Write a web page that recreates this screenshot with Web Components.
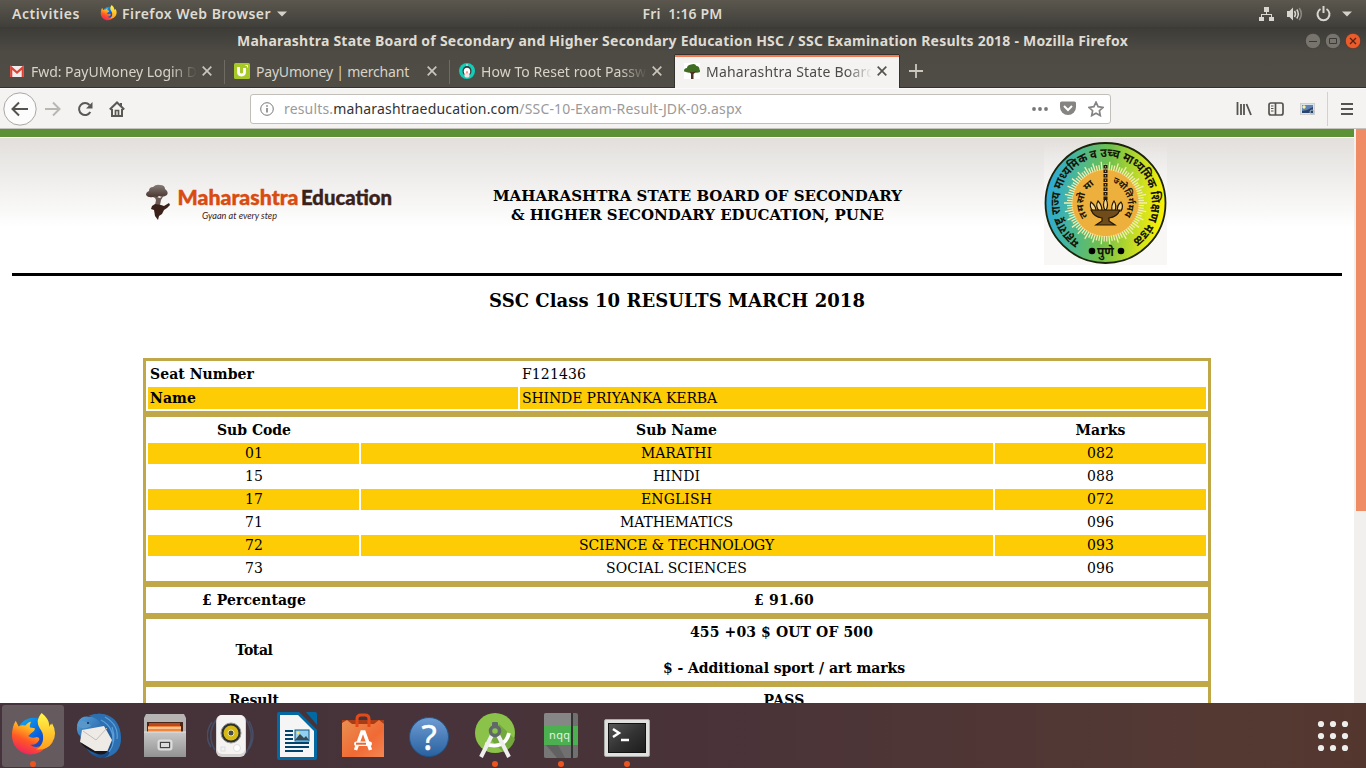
<!DOCTYPE html>
<html lang="en">
<head>
<meta charset="utf-8">
<title>Maharashtra State Board - SSC Results</title>
<style>
html,body{margin:0;height:100%;overflow:hidden;background:#fff}
</style>
</head>
<body>
<desktop-screen></desktop-screen>
<script>
const define=(name,html,after)=>customElements.define(name,class extends HTMLElement{
  constructor(){super();this.attachShadow({mode:'open'});}
  connectedCallback(){
    this.shadowRoot.innerHTML=typeof html==='function'?html(this):html;
    if(after)after(this);
  }
});
const UI='"Noto Sans","Open Sans",sans-serif';

const FIREFOX=id=>`<defs><linearGradient id="f${id}" x1=".8" y1="0" x2=".3" y2="1"><stop offset="0" stop-color="#fff44f"/><stop offset=".35" stop-color="#ffb01f"/><stop offset=".65" stop-color="#ff5726"/><stop offset="1" stop-color="#f0225f"/></linearGradient><linearGradient id="g${id}" x1="0" y1="0" x2="1" y2="1"><stop offset="0" stop-color="#0fb4f8"/><stop offset=".55" stop-color="#0a60dd"/><stop offset="1" stop-color="#36238a"/></linearGradient><linearGradient id="h${id}" x1="0" y1="0" x2="0" y2="1"><stop offset="0" stop-color="#fff94a"/><stop offset="1" stop-color="#ff9d1a"/></linearGradient></defs>
<circle cx="25" cy="23" r="18" fill="url(#g${id})"/>
<path d="M6 8l3 6q3-2 7-1 3-4 6-4-2 4-1 6l5 1q0 3-4 5l-3 3q4 3 9 1 4 1 2 4-3 5-9 4 6 5 13 0 7-5 4-14l5-8q4 13-4 23-8 11-21 9Q3 39 2 24 2 14 6 8z" fill="url(#f${id})"/>
<path d="M33 0q-7 8-2 16 5 6 3 14-2 6-7 8 12 1 17-7 6-10 0-20-2 4-3 4 1-8-8-15z" fill="url(#h${id})"/>`;

define('desktop-screen',`
<style>:host{display:flex;flex-direction:column;width:1366px;height:768px;overflow:hidden;font-family:${UI}}</style>
<top-bar></top-bar><window-title></window-title><tab-strip></tab-strip><nav-bar></nav-bar><page-view></page-view><app-dock></app-dock>`);

define('top-bar',`
<style>
:host{display:grid;grid-template-columns:1fr auto 1fr;align-items:center;height:27px;flex:none;background:linear-gradient(#5b574e,#403f3a);color:#dfdbd2;font-size:14px;font-weight:600;box-sizing:border-box;padding:0 14px 0 12px}
.l,.r{display:flex;align-items:center}
.r{justify-content:flex-end}
svg{display:block}
.m{margin-left:1px}
</style>
<div class="l"><fit-text w="68">Activities</fit-text><svg style="margin:0 5px 0 20px" width="17" height="17" viewBox="0 0 48 48">${FIREFOX('a')}</svg><fit-text w="149">Firefox Web Browser</fit-text><svg style="margin-left:6px" width="10" height="6"><path d="M0 .5h10L5 5.500z" fill="#d5d1c9"/></svg></div>
<fit-text class="m" w="80">Fri&nbsp; 1:16 PM</fit-text>
<div class="r">
<svg width="16" height="16" fill="#d9d6cf"><path d="M5 1h5v5H5zM0 11h5v4H0zM10 11h5v4h-5zM7 6h1v2h5v3h-1V9H3v2H2V8h5z"/></svg>
<svg style="margin-left:12px" width="16" height="16" viewBox="0 0 16 16" fill="none" stroke="#d9d6cf" stroke-width="1.500"><path d="M0 5h2.500L6 1.500v13L2.500 11H0z" fill="#d9d6cf" stroke="none"/><path d="M7.500 5Q9.500 8 7.500 11"/><path d="M9.800 3.500Q12.800 8 9.800 12.500"/><path stroke="#8d8a82" d="M12.200 2Q16.500 8 12.200 14"/></svg>
<svg style="margin-left:13px" width="15" height="16" fill="none" stroke="#d9d6cf" stroke-width="2"><path d="M4.500 3A6 6 0 1 0 10.500 3M7.500 0v7"/></svg>
<svg style="margin-left:11px" width="10" height="6"><path d="M0 .5h10L5 5.500z" fill="#d5d1c9"/></svg>
</div>`);

define('window-title',`
<style>
:host{display:grid;grid-template-columns:1fr auto 1fr;align-items:center;height:28px;flex:none;background:linear-gradient(#3c3b37,#4e4b44 90%);color:#dfdbd2;font-weight:700;font-size:14px;padding:0 5px 0 4px}
.b{display:flex;gap:4px;justify-content:flex-end}svg{display:block}
fit-text{margin-top:-2px}
</style><span></span><fit-text w="891">Maharashtra State Board of Secondary and Higher Secondary Education HSC / SSC Examination Results 2018 - Mozilla Firefox</fit-text>
<div class="b">
<svg width="16" height="16"><circle cx="8" cy="8" r="7.700" fill="#77746d" stroke="#33322e" stroke-width=".6"/><path d="M4 8.500h8" stroke="#3a3935"/></svg>
<svg width="16" height="16"><circle cx="8" cy="8" r="7.700" fill="#77746d" stroke="#33322e" stroke-width=".6"/><path d="M4.500 5.500h7v5h-7z" fill="none" stroke="#3a3935"/></svg>
<svg width="16" height="16"><circle cx="8" cy="8" r="7.700" fill="#ec5b2c" stroke="#33322e" stroke-width=".6"/><path d="M5 5l6 6M11 5l-6 6" stroke="#54240f" stroke-width="1.300"/></svg>
</div>`);

define('browser-tab',e=>`
<style>
:host{display:flex;align-items:center;width:225px;height:32px;box-sizing:border-box;padding:0 13px 0 9px;color:#d8d3c8;font-size:14px;position:relative}
:host(:not([active]))::after{content:"";position:absolute;right:0;top:5px;width:1px;height:24px;background:#6e6b63}
:host([nosep])::after{display:none}
:host([active]){background:#f4f3f2;color:#4c4b48;border-top:2px solid #f1784f;width:224px;padding-right:12px;height:33px;box-shadow:-1px 0 #33322d,1px 0 #33322d,0 -1px #33322d;padding-bottom:3px}
.t{width:165px;margin-left:6px;overflow:hidden;white-space:nowrap;-webkit-mask-image:linear-gradient(90deg,#000 140px,transparent 166px)}
:host([full]) .t{-webkit-mask-image:none}
.c{margin-left:auto;display:block}
::slotted(svg){display:block;flex:none}
</style><slot></slot><div class="t"><fit-text w="${e.getAttribute('w')}">${e.getAttribute('label')}</fit-text></div>
<svg class="c" width="10" height="10"><path d="M.7.7l8.600 8.600M9.300.7L.7 9.300" stroke="${e.hasAttribute('active')?'#55534f':'#c9c5bc'}" stroke-width="1.700"/></svg>`);

define('tab-strip',`
<style>:host{display:flex;height:32px;flex:none;background:linear-gradient(#4e4b44,#504d46);box-shadow:inset 0 -1px #33322d;align-items:flex-start;padding-bottom:1px;position:relative}
.p{display:block;margin:9px 0 0 10px}browser-tab{flex:none}</style>
<browser-tab w="166" label="Fwd: PayUMoney Login D"><svg width="16" height="16"><rect x="1" y="3" width="14" height="11" fill="#eee"/><path d="M2.200 14V4.500L8 9.500l5.800-5V14" fill="none" stroke="#db4437" stroke-width="2.200"/></svg></browser-tab>
<browser-tab full w="153" label="PayUmoney | merchant"><svg width="16" height="16"><rect width="16" height="16" rx="1.500" fill="#a6c927"/><path d="M4.500 4v5q0 3 3 3t3-3V5" fill="none" stroke="#fff" stroke-width="2.800"/><path d="M11.500 2.500h2v2" fill="none" stroke="#fff"/></svg></browser-tab>
<browser-tab nosep w="165" label="How To Reset root Passw"><svg width="16" height="16"><circle cx="8" cy="8" r="8" fill="#12cdb8"/><circle cx="8" cy="2" r=".8" fill="#fff"/><ellipse cx="8" cy="8" rx="4.500" ry="5" fill="#3b3438"/><ellipse cx="8" cy="8.200" rx="3.200" ry="3.500" fill="#fff"/><circle cx="8" cy="12" r="2.600" fill="#f2e4e4"/><path d="M7 8.500h2L8 11z" fill="#ef5a4a"/></svg></browser-tab>
<browser-tab active w="169" label="Maharashtra State Board"><svg width="16" height="16"><rect width="16" height="16" fill="#fff"/><path d="M0 8.500Q-.2 5 3 5q0-3 4-3.500 4-1.500 5.500 1.500 3 0 3 3.500 1.500 2.500-1 3-2.500.5-6-.5-4 1.500-8-.5z" fill="#3f6d22"/><path d="M5 8l2 3v5h2.500v-5L13 8l-3.500 1H6z" fill="#4c3424"/></svg></browser-tab>
<svg class="p" width="14" height="14"><path d="M7 0v14M0 7h14" stroke="#cbc7be" stroke-width="1.800"/></svg>`);

define('nav-bar',`
<style>
:host{display:flex;align-items:center;height:41px;flex:none;box-sizing:border-box;background:#f4f3f2;border-top:1px solid #fafafa;border-bottom:1px solid #c6c3bf;padding:0 13px 0 3px;position:relative}
svg{display:block;flex:none}
.url{display:flex;align-items:center;box-sizing:border-box;width:861px;height:30px;border:1px solid #c2bfbb;border-radius:3px;background:#fff;margin-left:125px;padding:0 6px 0 9px;font-size:14px;color:#9a9a9a;white-space:nowrap}
b{font-weight:400;color:#333}
.s{flex:1}
</style>
<svg width="34" height="34"><circle cx="17" cy="17" r="16.200" fill="#fcfcfc" stroke="#aaa7a3"/><path d="M25 17H10M16 10.500L9.500 17l6.500 6.500" fill="none" stroke="#55534f" stroke-width="2"/></svg>
<svg style="margin-left:8px" width="16" height="16" fill="none" stroke="#b9b7b4" stroke-width="2"><path d="M0 8h14M8 1.500L14.500 8 8 14.500"/></svg>
<svg style="margin-left:16px" width="16" height="16" fill="none" stroke="#5a5855" stroke-width="2"><path d="M13.300 11A6 6 0 1 1 12.500 4"/><path d="M15.500 1v6.500H9z" fill="#5a5855" stroke="none"/></svg>
<svg style="margin-left:16px" width="16" height="16" fill="none" stroke="#5a5855" stroke-width="2"><path d="M.8 8.500L8 1.500l7.200 7M3 8v7h10V8"/><path d="M12 2v3" /><path d="M6.500 15V9.500h3V15" stroke-width="1.700"/></svg>
<div class="url"><svg width="14" height="14" fill="none" stroke="#777"><circle cx="7" cy="7" r="6.300"/><path d="M7 6v4.500M7 3.200v1.500" stroke-width="1.500"/></svg>
<fit-text style="margin-left:10px" w="458">results.<b>maharashtraeducation.com</b>/SSC-10-Exam-Result-JDK-09.aspx</fit-text><span class="s"></span>
<svg width="16" height="6" fill="#777"><circle cx="2" cy="3" r="1.900"/><circle cx="8" cy="3" r="1.900"/><circle cx="14" cy="3" r="1.900"/></svg>
<svg style="margin-left:12px" width="16" height="15"><path d="M1.500.5h13q1.500 0 1.500 1.500v4a8 8 0 0 1-16 0V2Q0 .5 1.500.5z" fill="#858482"/><path d="M4 5l4 4 4-4" fill="none" stroke="#fff" stroke-width="2"/></svg>
<svg style="margin-left:12px" width="16" height="16" viewBox="0 0 16 16"><path d="M8 1.200l2.100 4.500 4.900.7-3.600 3.300.9 4.900L8 12.200l-4.300 2.400.9-4.900L1 6.400l4.900-.7z" fill="none" stroke="#858482" stroke-width="1.700"/></svg></div>
<span class="s"></span>
<svg width="16" height="16" stroke="#55534f" stroke-width="1.800"><path d="M1.500 1v13M5 3v11M8 3v11M10.500 3l4.500 11"/></svg>
<svg style="margin-left:16px" width="16" height="16" fill="none" stroke="#55534f" stroke-width="1.700"><rect x="1" y="2" width="14" height="12" rx="2"/><path d="M7.500 2v12"/><path d="M3 5h2.500M3 7.500h2.500M3 10h2.500" stroke-width="1"/></svg>
<svg style="margin-left:16px" width="16" height="16"><rect x=".5" y="2.500" width="14" height="11" fill="#dde3ea" stroke="#cfcfcf"/><rect x="2" y="4" width="11" height="8" fill="#5f83b3"/><path d="M2 10l5-1 6-3v6H2z" fill="#27446f"/><circle cx="4" cy="6" r="1.700" fill="#fff3a0"/><circle cx="12" cy="11" r="2" fill="none" stroke="#aab4c5"/></svg>
<svg style="margin-left:11px" width="1" height="34"><path d="M.5 0v34" stroke="#d3d0cd"/></svg>
<svg style="margin-left:13px" width="12" height="14" stroke="#55534f" stroke-width="2"><path d="M0 2h12M0 7h12M0 12h12"/></svg>`);

define('site-logo',`
<style>:host{display:block;width:250px;height:40px;font-weight:400}svg{display:block}</style>
<svg width="250" height="40" viewBox="0 0 250 40">
<defs><linearGradient id="t" x1="0" y1="0" x2="0" y2="1"><stop offset="0" stop-color="#857b76"/><stop offset="1" stop-color="#47332b"/></linearGradient></defs>
<g transform="translate(0 1)"><path d="M1 10q0-3 3-4 0-4 4-4 3-3 7-2 5 0 5 4 4 3 2 6-4 3-8 1-3 3-6 1-5 1-7-2z" fill="url(#t)"/><path d="M9 11l2 4-1 5h5l1-5 3-5-4 3-3-1z" fill="#6c5b54"/><path d="M7 21l3-2 6 1 3 1 5-3 1 2-3 3-3 2-2 4-3 2-1 4-3-4-1-6-3-1z" fill="#3a221a"/></g>
<text x="32.500" y="21" font-family="Lato,sans-serif" font-weight="900" font-size="20" textLength="121" lengthAdjust="spacingAndGlyphs" fill="#d94b10" stroke="#d94b10" stroke-width=".4">Maharashtra</text>
<text x="156" y="20.500" font-family="Lato,sans-serif" font-weight="900" font-size="20" textLength="91" lengthAdjust="spacingAndGlyphs" fill="#3a221a" stroke="#3a221a" stroke-width=".4">Education</text>
<text x="57" y="34.500" font-family="Lato,sans-serif" font-style="italic" font-size="9.500" textLength="75" lengthAdjust="spacingAndGlyphs" fill="#3a221a">Gyaan at every step</text></svg>`);

define('board-emblem',()=>{
let rays='';
for(let i=0;i<90;i++){const a=i*Math.PI/45,r=i%3?38.5:41.5;rays+=`M${61.5+33*Math.cos(a)} ${61+33*Math.sin(a)}L${61.5+r*Math.cos(a)} ${61+r*Math.sin(a)}`;}
return `<style>:host{display:block;width:123px;height:123px;background:linear-gradient(#fff0,#f8f7f6 50%)}svg{display:block}text{font-family:"Noto Sans Devanagari","Noto Sans",sans-serif;font-weight:700;fill:#171508}</style>
<svg width="123" height="123" viewBox="0 0 123 123"><defs><linearGradient id="r" x1="0" y1=".45" x2="1" y2=".55"><stop offset="0" stop-color="#2aa9e0"/><stop offset=".2" stop-color="#45b5a0"/><stop offset=".5" stop-color="#6fc04b"/><stop offset=".8" stop-color="#cfe01f"/><stop offset="1" stop-color="#fff200"/></linearGradient>
<path id="o" d="M37.100 100A46 46 0 1 1 85.900 100"/>
<path id="i" d="M45 76A21.500 21.500 0 0 1 61.500 40"/><path id="j" d="M61.500 40A21.500 21.500 0 0 1 78 76"/></defs>
<circle cx="61.500" cy="61" r="60" fill="url(#r)" stroke="#1b2408" stroke-width="1.800"/>
<circle cx="61.500" cy="61" r="34" fill="#eeb03c"/><path d="${rays}" stroke="#f3edb0" stroke-width="1.300"/>
<text font-size="12.500" textLength="233" lengthAdjust="spacingAndGlyphs"><textPath href="#o" startOffset="1">महाराष्ट्र राज्य माध्यमिक व उच्च माध्यमिक शिक्षण मंडळ</textPath></text>
<text font-size="9.500" textLength="37" lengthAdjust="spacingAndGlyphs"><textPath href="#i" startOffset="2">तमसो मा</textPath></text>
<text font-size="9.500" textLength="40" lengthAdjust="spacingAndGlyphs"><textPath href="#j" startOffset="7">ज्योतिर्गमय</textPath></text>
<text x="61.500" y="114" text-anchor="middle" font-size="12">पुणे</text><circle cx="48" cy="109" r="3.300"/><circle cx="77" cy="109" r="3.300"/>
<path d="M61.500 23v36" stroke="#211708" stroke-width="4" stroke-dasharray="3.500 1"/><path d="M61.500 24v34" stroke="#c9a13a" stroke-width="1.200" stroke-dasharray="1.500 3"/>
<g fill="#f8d98b" stroke="#211708" stroke-width="1.200"><path d="M49 69q-4-4-2-9 5 4 5 9zM55 69q-4-5-1-10 4 4 4 10zM61.500 69q-4-6 0-13 4 7 0 13zM68 69q-1-6 2-10 3 4 1 10zM74 69q-2-5 3-9 3 4 0 9z"/><path d="M47 68h29q-3 7-11 8v3l6 4H52l6-4v-3q-8-1-11-8z" fill="#6f4c1a"/></g></svg>`;});

define('marks-table',`
<style>
:host{display:block;width:1068px}
section{border:3px solid #c0a848;padding:2px;display:grid;gap:2px;box-sizing:border-box;font:14px/21px "DejaVu Serif",serif;color:#000}
.two{grid-template-columns:370px 1fr}
.three{grid-template-columns:211px 632px 211px;text-align:center}
.agg{grid-template-columns:211px 1fr;text-align:center;font-weight:700}
div{height:21px;padding:0 2px;display:flex;align-items:center;justify-content:center;box-sizing:border-box}
.two div,.h,.r{height:22px}.two div{justify-content:flex-start}
.two b,.h{font-weight:700}
.y{background:#fdcc05}
.three div:nth-child(3n+1),.agg div{padding:0 1px 0 2px}
.three div:nth-child(3n+2){padding:0 3px 0 2px}
.tot{height:58px;flex-direction:column;gap:15px}
</style>
<section class="two"><div><b><fit-text w="104">Seat Number</fit-text></b></div><div><fit-text w="64">F121436</fit-text></div>
<div class="y"><b><fit-text w="46">Name</fit-text></b></div><div class="y"><fit-text w="195">SHINDE PRIYANKA KERBA</fit-text></div></section>
<section class="three"></section>
<section class="agg"><div class="r"><fit-text w="104">£ Percentage</fit-text></div><div class="r"><fit-text w="60">£ 91.60</fit-text></div></section>
<section class="agg"><div class="tot"><fit-text w="37">Total</fit-text></div><div class="tot"><fit-text w="183" style="margin-right:5px">455 +03 $ OUT OF 500</fit-text><fit-text w="242">$ - Additional sport / art marks</fit-text></div></section>
<section class="agg"><div class="r"><fit-text w="50">Result</fit-text></div><div class="r"><fit-text w="41">PASS</fit-text></div></section>`,e=>{
  const rows=[['Sub Code',74,'Sub Name',81,'Marks',50],['01',18,'MARATHI',71,'082',27],['15',18,'HINDI',47,'088',27],['17',18,'ENGLISH',71,'072',27],['71',18,'MATHEMATICS',113,'096',27],['72',18,'SCIENCE &amp; TECHNOLOGY',195,'093',27],['73',18,'SOCIAL SCIENCES',141,'096',27]];
  e.shadowRoot.querySelector('.three').innerHTML=rows.map((r,n)=>[0,2,4].map(k=>`<div class="${n?(n%2?'y':''):'h'}"><fit-text w="${r[k+1]}">${r[k]}</fit-text></div>`).join('')).join('');
});

define('page-view',`
<style>
:host{display:flex;height:574px;flex:none;overflow:hidden;background:#fff;font-family:"DejaVu Serif",serif;color:#000}
main{width:1354px;flex:none;background:linear-gradient(#e2dfdc,#fff 90px) 0 9px no-repeat;height:574px;overflow:hidden}
.g{height:8px;background:#5c9135}
header{display:grid;grid-template-columns:481px 409px 1fr;height:136px;margin:0 12px;border-bottom:3px solid #000;font-weight:700;font-size:15px;line-height:19px}
header site-logo{margin:47px 0 0 133px}
.m{padding-top:50px;display:flex;flex-direction:column;align-items:center}
board-emblem{margin:5px 0 0 142px}
h1{margin:13px 0 0;text-align:center;font-size:18px;line-height:24px}
marks-table{margin:45px 0 0 143px}
aside{width:12px;background:#f1f0ef;display:flex;justify-content:flex-end}
aside i{width:10px;height:382px;background:#f08c65}
</style>
<main><div class="g"></div><header><site-logo></site-logo><div class="m"><fit-text w="409">MAHARASHTRA STATE BOARD OF SECONDARY</fit-text><fit-text w="373">&amp; HIGHER SECONDARY EDUCATION, PUNE</fit-text></div><board-emblem></board-emblem></header>
<h1><fit-text w="376">SSC Class 10 RESULTS MARCH 2018</fit-text></h1>
<marks-table></marks-table></main><aside><i></i></aside>`);

define('dock-item',`
<style>:host{display:flex;flex-direction:column;align-items:center;width:62px;height:62px;border-radius:3px;position:relative;box-sizing:border-box;padding-top:7px}
:host([active]){background:#655a5e}
:host([running])::after{content:"";position:absolute;left:28px;top:56px;width:6px;height:6px;border-radius:50%;background:#e95420}
::slotted(svg){display:block}</style><slot></slot>`);

define('app-dock',`
<style>:host{display:flex;gap:4px;height:65px;flex:none;background:linear-gradient(90deg,#44333a,#493339 50%,#543933 88%,#53372f);box-sizing:border-box;padding:2px}
.a{margin:15px 15px 0 auto;display:block}</style>
<dock-item active running><svg width="46" height="46" viewBox="0 0 48 48" style="margin-top:1px">${FIREFOX('b')}</svg></dock-item>
<dock-item><svg width="48" height="48"><defs><linearGradient id="tb" x2="1" y2="1"><stop stop-color="#5ba6e0"/><stop offset=".5" stop-color="#2765a8"/><stop offset="1" stop-color="#123569"/></linearGradient></defs><path d="M3 10q4-7 12-5 8-6 18-1 13 7 13 22 0 14-12 18-4 2-9 2-7-1-13-9L5 24q-5-5-2-14z" fill="url(#tb)"/><path d="M7 18l22-4 8 14-5 12H20L5 30z" fill="#eeeae5"/><path d="M8 19l13 9 11-12" fill="none" stroke="#c4beb8"/><path d="M5 30l15 9h13q-5 6-13 2Q10 37 5 30z" fill="#18171b"/><path d="M13 4q11 2 13 9 8-1 9 6 5 8-1 23-2 3-7 4 19-2 19-20Q45 5 28 2q-8-1-15 2z" fill="#2d70b2"/><path d="M30 5q14 8 12 22M26 8q13 7 12 22M37 15q5 14-3 25" fill="none" stroke="#5c9fd8" stroke-width="1.200"/><path d="M2 13q5 6 14 1-3-5-10-5-3 1-4 4z" fill="#5a97c9"/><circle cx="13" cy="11" r="1" fill="#112c50"/></svg></dock-item>
<dock-item><svg width="48" height="48"><defs><linearGradient id="fl" x2="0" y2="1"><stop stop-color="#c8c8c8"/><stop offset="1" stop-color="#929292"/></linearGradient></defs><path d="M5 2h38l2 4v17H3V6z" fill="#b6b5b4"/><rect x="6" y="10" width="36" height="13" fill="#48261a"/><path d="M8 11h31v3H8z" fill="#bc481c"/><path d="M7 14h33v9H7z" fill="#ee873e"/><path d="M7 16h33" stroke="#ffc191" stroke-width="2"/><path d="M3 20h42v25H3z" fill="url(#fl)"/><path d="M3 20h42" stroke="#e4e4e4"/><rect x="17.500" y="28.500" width="13" height="9" rx="2" fill="#a3a3a3" stroke="#dedede" stroke-width="2"/><rect x="19.500" y="30.500" width="9" height="5" fill="#ddd" stroke="#444"/></svg></dock-item>
<dock-item><svg width="48" height="48"><g fill="none" stroke="#486891" opacity=".5" stroke-width="1.500"><path d="M9 8Q-1 23 8 38M5 10Q-4 23 4 35M38 6q12 17 1 35M42 9q8 14 0 28"/></g><rect x="9" y="3" width="30" height="42" rx="6" fill="#d5d4d2"/><rect x="10" y="3" width="28" height="39" rx="5" fill="#f4f3f2"/><circle cx="24" cy="21" r="10" fill="#2e302d" stroke="#999" /><circle cx="24" cy="21" r="7.500" fill="#d7b916"/><circle cx="24" cy="21" r="3" fill="#4b4b4b" stroke="#eee5a0"/><circle cx="30" cy="36" r="3.500" fill="#fff" stroke="#e0e0e0"/><rect x="14" y="35" width="4" height="4" fill="none" stroke="#ddd"/></svg></dock-item>
<dock-item><svg width="48" height="48"><path d="M6 0h20l18 18v28q0 2-2 2H6q-2 0-2-2V2q0-2 2-2z" fill="#0369a3"/><path d="M7 3h18l16 16v26H7z" fill="#f5f5f5"/><path d="M33 0h9q2 0 2 2v11z" fill="#0369a3"/><path d="M12 19h8M12 23h8M12 27h8M12 31h24M12 35h24M12 39h18" stroke="#00436b" stroke-width="2"/><rect x="22" y="18" width="14" height="11" fill="#8fd0f3" stroke="#14547b"/><path d="M22 28l5-6 4 4 2-2 3 4z" fill="#394951"/><circle cx="25" cy="21" r="1.400" fill="#ffe45b"/></svg></dock-item>
<dock-item><svg width="48" height="48"><defs><linearGradient id="sw" x2="1" y2="1"><stop stop-color="#e99050"/><stop offset=".6" stop-color="#f06a35"/><stop offset="1" stop-color="#f48753"/></linearGradient></defs><path d="M3 8h42v6H3z" fill="#a73c16"/><path d="M3 11l5-3 5 4h22l5-4 5 4v33H3z" fill="url(#sw)"/><path d="M18 15V7q0-4 4-4h4q4 0 4 4v8" fill="none" stroke="#e24a19" stroke-width="3"/><path d="M16.500 38l6.500-18h2l6.500 18" fill="none" stroke="#fff" stroke-width="3.500"/><rect x="15" y="29.500" width="18" height="4.500" rx="2.200" fill="#fff"/><path d="M17 31.700h10" stroke="#ec6430" stroke-width="2"/></svg></dock-item>
<dock-item><svg width="48" height="48"><defs><linearGradient id="hp" x2="0" y2="1"><stop stop-color="#6f9cd4"/><stop offset="1" stop-color="#28629f"/></linearGradient></defs><circle cx="24" cy="25" r="19.500" fill="url(#hp)" stroke="#235589"/><text x="24" y="38" text-anchor="middle" font-family="Noto Sans,sans-serif" font-size="35" font-weight="400" fill="#fff" stroke="#fff" stroke-width=".5">?</text></svg></dock-item>
<dock-item running><svg width="48" height="48"><circle cx="24" cy="21" r="20" fill="#8bc34a"/><path d="M28 12l16 15q-3 10-12 13L20 28z" fill="#73a83c"/><path d="M14 32q20 6 24-11" fill="none" stroke="#fff" stroke-width="3.800"/><path d="M22 21L10 45M26 21l12 24" stroke="#eee" stroke-width="4"/><rect x="21" y="10" width="6" height="6" rx="1" fill="#61686a"/><circle cx="24" cy="19" r="4.500" fill="#8bc34a" stroke="#61686a" stroke-width="3.500"/></svg></dock-item>
<dock-item running><svg width="48" height="48"><rect x="7" y="1" width="34" height="45" rx="2" fill="#6f706f"/><path d="M7 14V3q0-2 2-2h25v13z" fill="#858685"/><path d="M7 33h2l13 13H9q-2 0-2-2z" fill="#777"/><path d="M9 33h12l7 13H20z" fill="#606160"/><path d="M7 14h34v19H7z" fill="#4caf50"/><path d="M35 1v45" stroke="#333" stroke-width="2"/><text x="12" y="27" font-family="Noto Sans,sans-serif" font-size="11" textLength="21" fill="#e3f5e3">nqq</text></svg></dock-item>
<dock-item running><svg width="48" height="48"><defs><linearGradient id="te" x2="1" y2="1"><stop stop-color="#565756"/><stop offset=".5" stop-color="#323332"/><stop offset="1" stop-color="#1b1c1b"/></linearGradient></defs><rect x="1.500" y="7.500" width="45" height="37" rx="1.500" fill="#e0e0de" stroke="#aaa"/><rect x="5.500" y="11.500" width="37" height="29" fill="url(#te)" stroke="#111"/><path d="M10 17l6 4-6 4" fill="none" stroke="#fff" stroke-width="2.500"/><path d="M18 28h8" stroke="#fff" stroke-width="2.500"/></svg></dock-item>
<svg class="a" width="32" height="32" fill="#eeeeec"><g id="d"></g></svg>`,e=>{
  e.shadowRoot.querySelector('#d').innerHTML=[4,16,28].map(y=>[4,16,28].map(x=>`<circle cx="${x}" cy="${y}" r="3.100"/>`).join('')).join('');
});

/* Text run whose tracking is adjusted so that it spans the width in its "w" attribute. */
define('fit-text','<style>:host{display:inline-block;white-space:pre;flex:none}span{display:inline-block}</style><span><slot></slot></span>',e=>{
  const s=e.shadowRoot.querySelector('span'),w=+e.getAttribute('w'),n=e.textContent.length;
  s.style.letterSpacing=(w-s.getBoundingClientRect().width)/n+'px';
});
</script>
</body>
</html>
